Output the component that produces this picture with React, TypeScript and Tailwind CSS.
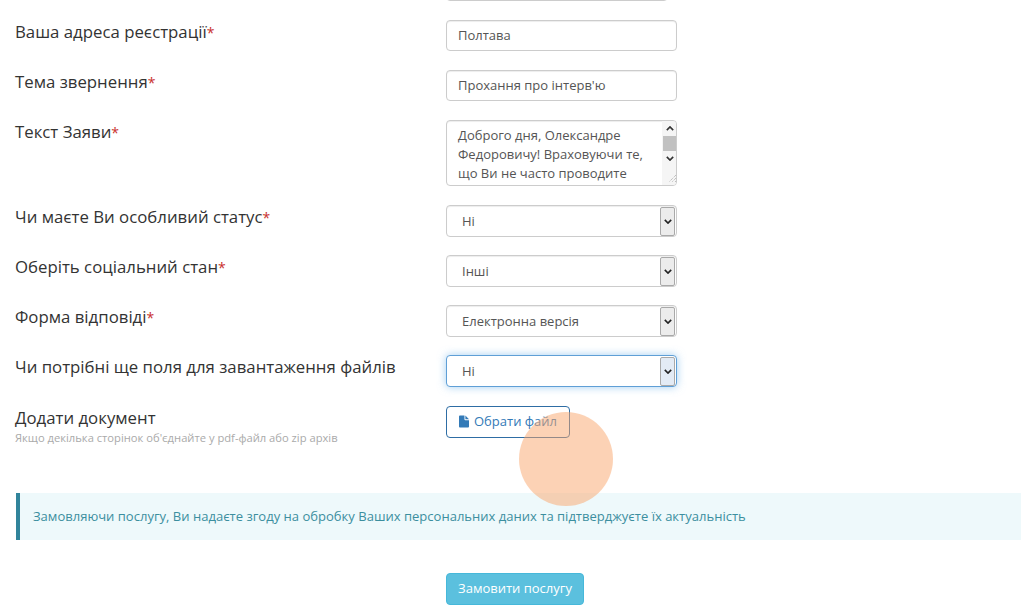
const selects = [
  { label: 'Чи маєте Ви особливий статус', required: true, value: 'Ні' },
  { label: 'Оберіть соціальний стан', required: true, value: 'Інші' },
  { label: 'Форма відповіді', required: true, value: 'Електронна версія' },
  { label: 'Чи потрібні ще поля для завантаження файлів', required: false, value: 'Ні', focused: true },
];

function Label({ text, required }: { text: string; required?: boolean }) {
  return (
    <div className="w-[431px] shrink-0 text-[16.8px] leading-[24px] text-[#333]">
      {text}
      {required && <span className="text-[14px] text-[#c9302c]">*</span>}
    </div>
  );
}

function Chevron({ className }: { className: string }) {
  return (
    <svg viewBox="0 0 10 6" className={className} fill="none" stroke="currentColor" strokeWidth="2">
      <path d="M1 1l4 4 4-4" />
    </svg>
  );
}

function SelectBox({ value, focused }: { value: string; focused?: boolean }) {
  return (
    <div
      className={`flex h-[32px] w-[231px] items-center justify-between rounded-[4px] border bg-white pl-[15px] pr-[1px] text-[13px] ${
        focused ? 'border-[#5f9fd6] shadow-[0_0_8px_rgba(102,175,233,0.6)]' : 'border-[#ccc] shadow-[inset_0_1px_1px_rgba(0,0,0,0.075)]'
      } text-[#555]`}
    >
      <span className="pt-[2px]">{value}</span>
      <div className={`flex h-[29px] w-[15px] items-center justify-center rounded-[2px] border border-[#a9a9a9] ${focused ? 'bg-[#e3ebf5]' : 'bg-[#ececec]'}`}>
        <Chevron className="h-[5px] w-[8px] text-[#222]" />
      </div>
    </div>
  );
}

export default function App() {
  return (
    <div className="relative h-[606px] w-[1024px] overflow-hidden bg-white font-['Open_Sans',sans-serif]">
      <div className="ml-[446px] mt-[-31px] h-[32px] w-[222px] rounded-[4px] border border-[#ccc]" />

      <div className="mt-[19px] flex h-[31px] pl-[15px]">
        <Label text="Ваша адреса реєстрації" required />
        <div className="flex h-[31px] w-[231px] items-center rounded-[4px] border border-[#ccc] px-[11px] text-[13px] text-[#555] shadow-[inset_0_1px_1px_rgba(0,0,0,0.075)]">Полтава</div>
      </div>

      <div className="mt-[19px] flex h-[31px] pl-[15px]">
        <Label text="Тема звернення" required />
        <div className="flex h-[31px] w-[231px] items-center rounded-[4px] border border-[#ccc] px-[11px] text-[13px] text-[#555] shadow-[inset_0_1px_1px_rgba(0,0,0,0.075)]">Прохання про інтерв'ю</div>
      </div>

      <div className="mt-[19px] flex h-[66px] pl-[15px]">
        <Label text="Текст Заяви" required />
        <div className="flex h-[66px] w-[231px] overflow-hidden rounded-[4px] border border-[#ccc] pl-[11px] pt-[5px] text-[13px] leading-[19px] text-[#555] shadow-[inset_0_1px_1px_rgba(0,0,0,0.075)]">
          <div className="w-[204px] shrink-0">
            Доброго дня, Олександре Федоровичу! Враховуючи те, що Ви не часто проводите
          </div>
          <div className="-mt-[5px] flex h-[64px] w-[15px] shrink-0 flex-col items-center bg-[#f5f5f5]">
            <div className="flex h-[15px] items-center"><Chevron className="h-[5px] w-[8px] rotate-180 text-[#333]" /></div>
            <div className="h-[15px] w-[14px] bg-[#c1c1c1]" />
            <div className="flex h-[15px] items-center"><Chevron className="h-[5px] w-[8px] text-[#333]" /></div>
            <svg viewBox="0 0 10 10" className="ml-auto mt-[7px] h-[10px] w-[10px] text-[#aaa]" fill="none" stroke="currentColor" strokeWidth="1" strokeDasharray="1 1">
              <path d="M9 2L2 9M9 5L5 9M9 8L8 9" />
            </svg>
          </div>
        </div>
      </div>

      <div className="mt-[19px] flex flex-col gap-[18px]">
        {selects.map(({ label, required, value, focused }) => (
          <div key={label} className="flex h-[32px] pl-[15px]">
            <Label text={label} required={required} />
            <SelectBox value={value} focused={focused} />
          </div>
        ))}
      </div>

      <div className="mt-[19px] flex h-[32px] pl-[15px]">
        <div className="w-[431px] shrink-0">
          <div className="text-[16.8px] leading-[24px] text-[#333]">Додати документ</div>
          <div className="pt-[1px] text-[11.2px] leading-[14px] text-[#aaa]">Якщо декілька сторінок об'єднайте у pdf-файл або zip архів</div>
        </div>
        <div className="flex h-[32px] w-[124px] items-center gap-[5px] rounded-[4px] border border-[#2e6da4] pl-[12px] text-[13px] text-[#337ab7]">
          <svg viewBox="0 0 11 13" className="-mt-[2px] h-[13px] w-[10px] fill-[#337ab7]">
            <path d="M0 1a1 1 0 0 1 1-1h5v4a1 1 0 0 0 1 1h4v7a1 1 0 0 1-1 1H1a1 1 0 0 1-1-1z" />
            <path d="M7 0l4 4H7z" />
          </svg>
          Обрати файл
        </div>
      </div>

      <div className="ml-[16px] mt-[55px] flex h-[47px] w-[1005px] items-center border-l-[4px] border-[#31849b] bg-[#eef9fb] pl-[13px] text-[13.04px] text-[#3c8f9f]">
        Замовляючи послугу, Ви надаєте згоду на обробку Ваших персональних даних та підтверджуєте їх актуальність
      </div>

      <div className="ml-[446px] mt-[33px] flex h-[32px] w-[138px] items-center justify-center rounded-[4px] border border-[#46b8da] bg-[#5bc0de] text-[13px] text-white">
        Замовити послугу
      </div>

      {/* click highlight from the recording */}
      <div className="absolute left-[519px] top-[412px] h-[94px] w-[94px] rounded-full bg-[#f9a66c] opacity-50" />
    </div>
  );
}
